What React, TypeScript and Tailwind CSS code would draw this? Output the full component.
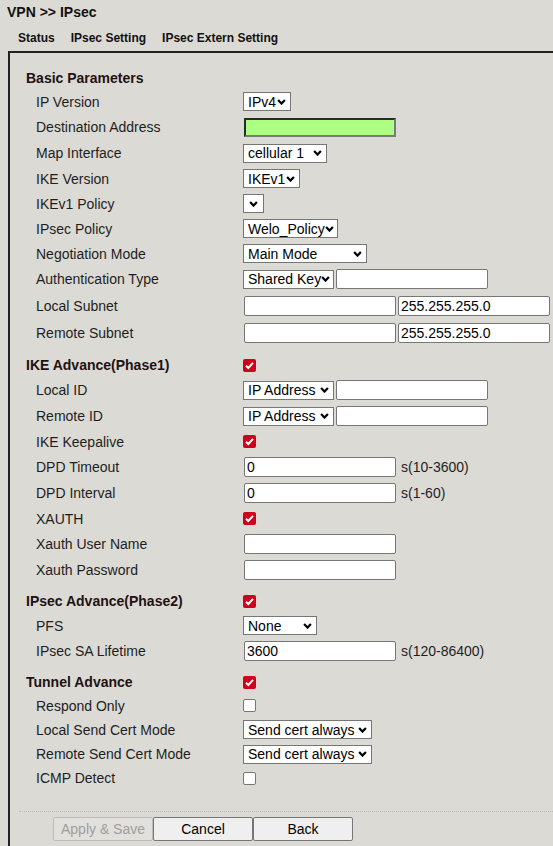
import React from "react";

const Chevron = () => (
  <svg width="9" height="6" viewBox="0 0 9 6" className="shrink-0">
    <path d="M1.1 1.1 L4.5 4.6 L7.9 1.1" fill="none" stroke="#000" strokeWidth="2.2" />
  </svg>
);

const Sel = ({ text, w }: { text: string; w: string }) => (
  <div
    className={`inline-flex h-[19px] ${w} items-center justify-between border border-[#767676] bg-white pl-[4px] pr-[4px] text-[14px] leading-[16px] text-black whitespace-nowrap overflow-hidden`}
  >
    <span>{text}</span>
    <Chevron />
  </div>
);

const Inp = ({ value = "", className = "" }: { value?: string; className?: string }) => (
  <div
    className={`inline-flex h-[20px] w-[152px] items-center rounded-[2px] border border-[#767676] bg-white pl-[2px] text-[14px] leading-[16px] text-black ${className}`}
  >
    {value}
  </div>
);

const Check = ({ checked }: { checked: boolean }) =>
  checked ? (
    <div className="flex h-[13px] w-[13px] items-center justify-center rounded-[2px] bg-[#d0021b]">
      <svg width="13" height="13" viewBox="0 0 13 13">
        <path d="M3 6.8 L5.3 9 L10 3.8" fill="none" stroke="#fff" strokeWidth="2" />
      </svg>
    </div>
  ) : (
    <div className="h-[13px] w-[13px] rounded-[2px] border border-[#767676] bg-white" />
  );

const Row = ({
  label,
  h,
  children,
}: {
  label: string;
  h: string;
  children?: React.ReactNode;
}) => (
  <div className={`flex ${h} items-center`}>
    <div className="w-[217px] shrink-0 pl-[10px] text-[14px] leading-[16px] text-[#1e1e1e]">{label}</div>
    <div className="flex items-center">{children}</div>
  </div>
);

const Head = ({
  label,
  h,
  children,
}: {
  label: string;
  h: string;
  children?: React.ReactNode;
}) => (
  <div className={`flex ${h} items-center`}>
    <div className="w-[217px] shrink-0 text-[14px] font-bold leading-[16px] text-[#1e1212]">{label}</div>
    <div className="flex items-center">{children}</div>
  </div>
);

const Unit = ({ children }: { children: React.ReactNode }) => (
  <span className="ml-[5px] text-[14px] leading-[16px] text-[#1e1e1e]">{children}</span>
);

export default function App() {
  return (
    <div className="min-h-[846px] overflow-hidden bg-[#dcdad5] font-['Liberation_Sans',Arial,sans-serif]">
      <div className="h-[24px] pl-[7px] pt-[4px] text-[14px] font-bold leading-[16px] text-[#111]">
        VPN &gt;&gt; IPsec
      </div>
      <div className="flex h-[27px] items-center pl-[10px] text-[12px] font-bold leading-[14px] text-[#111]">
        <span className="px-[8px]">Status</span>
        <span className="px-[8px]">IPsec Setting</span>
        <span className="px-[8px]">IPsec Extern Setting</span>
      </div>
      <div className="ml-[8px] min-h-[795px] border-l-2 border-t-2 border-[#222]">
        <div className="pl-[16px] pt-[14px]">
          <Head label="Basic Parameters" h="h-[22px]" />
          <Row label="IP Version" h="h-[25px]">
            <Sel text="IPv4" w="w-[48px]" />
          </Row>
          <Row label="Destination Address" h="h-[26px]">
            <div className="ml-[1px] h-[19px] w-[152px] border-2 border-b-[#7a7a7a] border-l-[#2a2a2a] border-r-[#7a7a7a] border-t-[#2a2a2a] bg-[#acff80]" />
          </Row>
          <Row label="Map Interface" h="h-[26px]">
            <Sel text="cellular 1" w="w-[84px]" />
          </Row>
          <Row label="IKE Version" h="h-[25px]">
            <Sel text="IKEv1" w="w-[57px]" />
          </Row>
          <Row label="IKEv1 Policy" h="h-[25px]">
            <div className="inline-flex h-[19px] w-[21px] items-center justify-center border border-[#767676] bg-white">
              <Chevron />
            </div>
          </Row>
          <Row label="IPsec Policy" h="h-[25px]">
            <Sel text="Welo_Policy" w="w-[95px]" />
          </Row>
          <Row label="Negotiation Mode" h="h-[25px]">
            <Sel text="Main Mode" w="w-[124px]" />
          </Row>
          <Row label="Authentication Type" h="h-[26px]">
            <Sel text="Shared Key" w="w-[91px]" />
            <Inp className="ml-[2px]" />
          </Row>
          <Row label="Local Subnet" h="h-[28px]">
            <Inp className="ml-[1px]" />
            <Inp className="ml-[2px]" value="255.255.255.0" />
          </Row>
          <Row label="Remote Subnet" h="h-[26px]">
            <Inp className="ml-[1px]" />
            <Inp className="ml-[2px]" value="255.255.255.0" />
          </Row>
          <Head label="IKE Advance(Phase1)" h="h-[31px] pt-[7px]">
            <Check checked />
          </Head>
          <Row label="Local ID" h="h-[26px]">
            <Sel text="IP Address" w="w-[91px]" />
            <Inp className="ml-[2px]" />
          </Row>
          <Row label="Remote ID" h="h-[26px]">
            <Sel text="IP Address" w="w-[91px]" />
            <Inp className="ml-[2px]" />
          </Row>
          <Row label="IKE Keepalive" h="h-[25px]">
            <Check checked />
          </Row>
          <Row label="DPD Timeout" h="h-[26px]">
            <Inp className="ml-[1px]" value="0" />
            <Unit>s(10-3600)</Unit>
          </Row>
          <Row label="DPD Interval" h="h-[26px]">
            <Inp className="ml-[1px]" value="0" />
            <Unit>s(1-60)</Unit>
          </Row>
          <Row label="XAUTH" h="h-[25px]">
            <Check checked />
          </Row>
          <Row label="Xauth User Name" h="h-[26px]">
            <Inp className="ml-[1px]" />
          </Row>
          <Row label="Xauth Password" h="h-[26px]">
            <Inp className="ml-[1px]" />
          </Row>
          <Head label="IPsec Advance(Phase2)" h="h-[30px] pt-[6px]">
            <Check checked />
          </Head>
          <Row label="PFS" h="h-[25px]">
            <Sel text="None" w="w-[74px]" />
          </Row>
          <Row label="IPsec SA Lifetime" h="h-[26px]">
            <Inp className="ml-[1px]" value="3600" />
            <Unit>s(120-86400)</Unit>
          </Row>
          <Head label="Tunnel Advance" h="h-[30px] pt-[6px]">
            <Check checked />
          </Head>
          <Row label="Respond Only" h="h-[23px]">
            <Check checked={false} />
          </Row>
          <Row label="Local Send Cert Mode" h="h-[25px]">
            <Sel text="Send cert always" w="w-[129px]" />
          </Row>
          <Row label="Remote Send Cert Mode" h="h-[24px]">
            <Sel text="Send cert always" w="w-[129px]" />
          </Row>
          <Row label="ICMP Detect" h="h-[24px]">
            <Check checked={false} />
          </Row>
        </div>
        <div className="ml-[9px] mt-[21px] border-t border-dotted border-[#bdbcb8]" />
        <div className="mt-[5px] flex pl-[43px]">
          <div className="flex h-[24px] w-[100px] items-center justify-center rounded-[2px] border border-[#bdbcb9] bg-[#e2e0dd] text-[14px] text-[#a09e9b]">
            Apply &amp; Save
          </div>
          <div className="flex h-[24px] w-[100px] items-center justify-center rounded-[2px] border border-[#767676] bg-[#efefef] text-[14px] text-black">
            Cancel
          </div>
          <div className="flex h-[24px] w-[100px] items-center justify-center rounded-[2px] border border-[#767676] bg-[#efefef] text-[14px] text-black">
            Back
          </div>
        </div>
      </div>
    </div>
  );
}
